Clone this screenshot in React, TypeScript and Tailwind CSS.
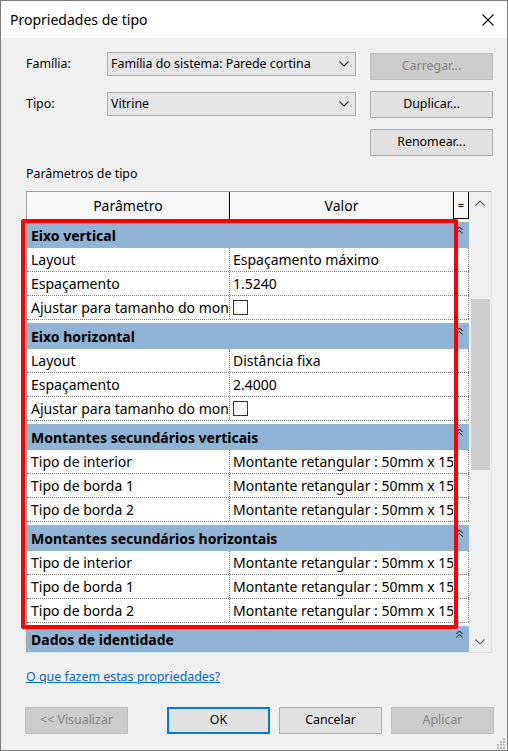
import React from 'react';

type Row = { label: string; value?: string; checkbox?: boolean };
type Group = { title: string; rows: Row[] };

const montante = 'Montante retangular : 50mm x 150mm';

const groups: Group[] = [
  {
    title: 'Eixo vertical',
    rows: [
      { label: 'Layout', value: 'Espaçamento máximo' },
      { label: 'Espaçamento', value: '1.5240' },
      { label: 'Ajustar para tamanho do montante', checkbox: true },
    ],
  },
  {
    title: 'Eixo horizontal',
    rows: [
      { label: 'Layout', value: 'Distância fixa' },
      { label: 'Espaçamento', value: '2.4000' },
      { label: 'Ajustar para tamanho do montante', checkbox: true },
    ],
  },
  {
    title: 'Montantes secundários verticais',
    rows: [
      { label: 'Tipo de interior', value: montante },
      { label: 'Tipo de borda 1', value: montante },
      { label: 'Tipo de borda 2', value: montante },
    ],
  },
  {
    title: 'Montantes secundários horizontais',
    rows: [
      { label: 'Tipo de interior', value: montante },
      { label: 'Tipo de borda 1', value: montante },
      { label: 'Tipo de borda 2', value: montante },
    ],
  },
  { title: 'Dados de identidade', rows: [] },
];

function Chevron({ up = false }: { up?: boolean }) {
  return (
    <svg width="10" height="6" viewBox="0 0 10 6" fill="none">
      <path
        d={up ? 'M0.5 5.5 L5 1 L9.5 5.5' : 'M0.5 0.5 L5 5 L9.5 0.5'}
        stroke="currentColor"
        strokeWidth="1.2"
      />
    </svg>
  );
}

function Collapse() {
  return (
    <svg width="7" height="8" viewBox="0 0 7 8" fill="none">
      <path d="M0.5 4 L3.5 1 L6.5 4 M0.5 7.5 L3.5 4.5 L6.5 7.5" stroke="#000" strokeWidth="1" />
    </svg>
  );
}

function Combo({ text }: { text: string }) {
  return (
    <div className="w-[249px] h-[24px] bg-[#e5e5e5] border border-[#adadad] flex items-center justify-between pl-[3px] pr-[6px] text-[12.4px] text-black">
      <span>{text}</span>
      <span className="text-[#333]">
        <Chevron />
      </span>
    </div>
  );
}

function Button({
  label,
  disabled = false,
  focused = false,
  className = '',
}: {
  label: string;
  disabled?: boolean;
  focused?: boolean;
  className?: string;
}) {
  const tone = disabled
    ? 'bg-[#cccccc] border border-[#bfbfbf] text-[#838383]'
    : focused
      ? 'bg-[#e1e1e1] border-2 border-[#0078d7] text-black'
      : 'bg-[#e1e1e1] border border-[#adadad] text-black';
  return (
    <div className={`w-[103px] h-[27px] flex items-center justify-center text-[12.4px] ${tone} ${className}`}>
      {label}
    </div>
  );
}

function GroupRow({ title }: { title: string }) {
  return (
    <div className="h-[29px] pt-[3px] bg-white">
      <div className="h-[26px] bg-[#8fb4d5] flex">
        <div className="flex-1 pl-[4px] flex items-center font-bold text-[14px] text-black whitespace-nowrap">
          {title}
        </div>
        <div className="w-[16px] flex justify-center pt-[4px] pr-[3px]">
          <Collapse />
        </div>
      </div>
    </div>
  );
}

function DataRow({ row }: { row: Row }) {
  return (
    <div className="h-[24px] flex bg-white border-b border-dotted border-[#7f7f7f] text-[14px] text-black">
      <div className="w-[203px] pl-[4px] flex items-center border-r border-dotted border-[#7f7f7f] overflow-hidden whitespace-nowrap">
        {row.label}
      </div>
      <div className="w-[223px] pl-[3px] flex items-center overflow-hidden whitespace-nowrap">
        {row.checkbox ? (
          <div className="w-[15px] h-[15px] border border-[#333] bg-white" />
        ) : (
          row.value
        )}
      </div>
      <div className="w-[16px] border-r border-dotted border-[#7f7f7f]" />
    </div>
  );
}

export default function App() {
  return (
    <div className="w-[508px] h-[751px] border border-[#7b7b7b] bg-[#f0f0f0] flex flex-col relative font-['Noto_Sans',sans-serif] text-black overflow-hidden">
      {/* title bar */}
      <div className="h-[37px] bg-white flex items-center justify-between pl-[9px] pr-[13px]">
        <span className="text-[14px]">Propriedades de tipo</span>
        <svg width="12" height="12" viewBox="0 0 12 12" fill="none">
          <path d="M0.5 0.5 L11.5 11.5 M11.5 0.5 L0.5 11.5" stroke="#000" strokeWidth="1.1" />
        </svg>
      </div>

      {/* family / type */}
      <div className="flex ml-[25px] mt-[14px]">
        <div className="flex flex-col">
          <div className="flex items-center">
            <span className="w-[81px] text-[12.4px]">Família:</span>
            <Combo text="Família do sistema: Parede cortina" />
          </div>
          <div className="flex items-center mt-[16px]">
            <span className="w-[81px] text-[12.4px]">Tipo:</span>
            <Combo text="Vitrine" />
          </div>
        </div>
        <div className="flex flex-col ml-[14px] mt-[1px] gap-[11px]">
          <Button label="Carregar..." disabled className="w-[123px]" />
          <Button label="Duplicar..." className="w-[123px]" />
          <Button label="Renomear..." className="w-[123px]" />
        </div>
      </div>

      <div className="ml-[25px] mt-[10px] h-[16px] flex items-center text-[12.4px]">Parâmetros de tipo</div>

      {/* property grid */}
      <div className="ml-[25px] mt-[9px] w-[466px] h-[462px] flex border-t border-l border-[#a0a0a0] border-r border-b border-r-[#e3e3e3] border-b-[#e3e3e3]">
        <div className="w-[442px] flex flex-col overflow-hidden">
          <div className="h-[27px] flex bg-[#f7f7f7] text-[14px] shrink-0">
            <div className="w-[203px] flex items-center justify-center border-r border-black">Parâmetro</div>
            <div className="w-[223px] flex items-center justify-center">Valor</div>
            <div className="w-[16px] flex items-center justify-center border-l border-r border-b border-black text-[11px]">=</div>
          </div>
          {groups.map((g) => (
            <div key={g.title}>
              <GroupRow title={g.title} />
              {g.rows.map((r, i) => (
                <DataRow key={i} row={r} />
              ))}
            </div>
          ))}
        </div>
        <div className="w-[22px] flex flex-col bg-[#f0f0f0]">
          <div className="h-[21px] flex items-center justify-center text-[#606060]">
            <Chevron up />
          </div>
          <div className="h-[86px]" />
          <div className="h-[171px] ml-[2px] w-[19px] bg-[#cdcdcd]" />
          <div className="flex-1" />
          <div className="h-[21px] flex items-center justify-center text-[#606060]">
            <Chevron />
          </div>
        </div>
      </div>

      <div className="ml-[25px] mt-[16px] h-[16px] flex items-center">
        <span className="text-[12.4px] text-[#0066cc] underline">O que fazem estas propriedades?</span>
      </div>

      {/* footer buttons */}
      <div className="flex ml-[24px] mt-[22px]">
        <Button label="<< Visualizar" disabled />
        <Button label="OK" focused className="ml-[39px]" />
        <Button label="Cancelar" className="ml-[9px]" />
        <Button label="Aplicar" disabled className="ml-[9px]" />
      </div>

      {/* size grip */}
      <svg className="absolute right-[1px] bottom-[1px]" width="11" height="11" viewBox="0 0 11 11">
        {[
          [8, 0], [8, 3], [5, 3], [8, 6], [5, 6], [2, 6], [8, 9], [5, 9], [2, 9],
        ].map(([x, y], i) => (
          <rect key={i} x={x} y={y} width="2" height="2" fill="#b8b8b8" />
        ))}
      </svg>

      {/* annotation */}
      <div className="absolute left-[20px] top-[218px] w-[437px] h-[410px] border-4 border-[#ff0000] rounded-[2px] pointer-events-none" />
    </div>
  );
}
